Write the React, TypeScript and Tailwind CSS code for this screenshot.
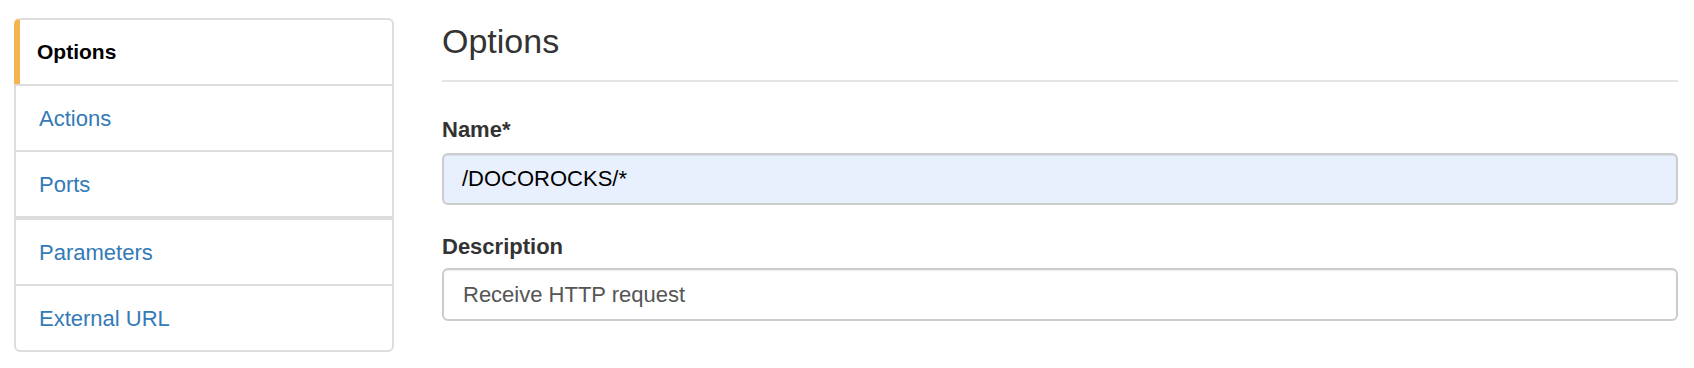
const tabs = [
  { label: "Options", active: true },
  { label: "Actions" },
  { label: "Ports" },
  { label: "Parameters", thick: true },
  { label: "External URL" },
];

function Sidebar() {
  return (
    <div className="mt-[18px] w-[380px] shrink-0 self-start">
      {tabs.map((tab, i) => {
        const last = i === tabs.length - 1;
        return (
          <div
            key={tab.label}
            className={[
              "flex h-[64px] items-center border-x-2 border-[#dddddd] bg-white box-content",
              i === 0 ? "rounded-t-[6px] border-t-2" : tab.thick ? "border-t-4" : "border-t-2",
              last ? "rounded-b-[6px] border-b-2" : "",
              tab.active ? "border-l-[6px] border-l-[#f4b44f] pl-[17px]" : "pl-[23px]",
            ].join(" ")}
          >
            {tab.active ? (
              <span className="text-[21px] font-bold text-black">{tab.label}</span>
            ) : (
              <a href="#" className="text-[22px] text-[#337ab7]">
                {tab.label}
              </a>
            )}
          </div>
        );
      })}
    </div>
  );
}

export default function App() {
  return (
    <div
      className="flex min-h-[368px] bg-white pl-[14px] pr-[16px]"
      style={{ fontFamily: '"Liberation Sans", Arial, Helvetica, sans-serif' }}
    >
      <Sidebar />

      <div className="ml-[48px] flex-1">
        {/* Header */}
        <div className="border-b-2 border-[#e4e4e4] pt-[21px] pb-[19px]">
          <h3 className="text-[34px] leading-[40px] text-[#333333]">Options</h3>
        </div>

        {/* Name */}
        <label className="mt-[33px] mb-[8px] block text-[22px] font-bold leading-[30px] text-[#333333]">
          Name*
        </label>
        <input
          readOnly
          value="/DOCOROCKS/*"
          className="block h-[52px] w-full rounded-[6px] border-2 border-[#cccccc] bg-[#e8f0fe] px-[18px] text-[22px] text-black shadow-[inset_0_1px_1px_rgba(0,0,0,0.075)] outline-none"
        />

        {/* Description */}
        <label className="mt-[27px] mb-[6px] block text-[22px] font-bold leading-[30px] text-[#333333]">
          Description
        </label>
        <input
          readOnly
          value="Receive HTTP request"
          className="block h-[53px] w-full rounded-[6px] border-2 border-[#cccccc] bg-white px-[19px] text-[22px] text-[#555555] shadow-[inset_0_1px_1px_rgba(0,0,0,0.075)] outline-none"
        />
      </div>
    </div>
  );
}
